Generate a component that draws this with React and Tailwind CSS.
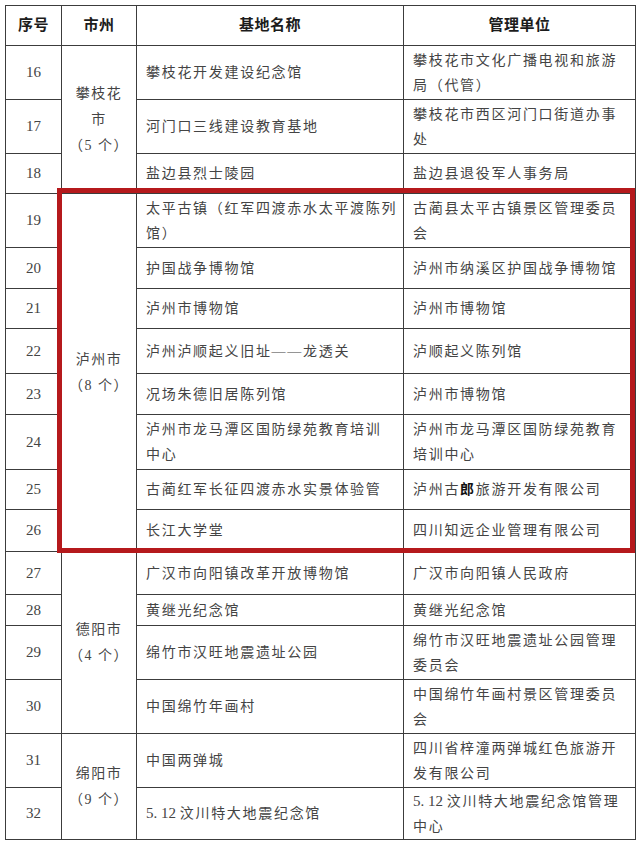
const rows = [
  { no: 16, h: 54, name: ["攀枝花开发建设纪念馆"], unit: ["攀枝花市文化广播电视和旅游", "局（代管）"], city: { lines: ["攀枝花", "市", "（5 个）"], span: 3 } },
  { no: 17, h: 54, name: ["河门口三线建设教育基地"], unit: ["攀枝花市西区河门口街道办事", "处"] },
  { no: 18, h: 40, name: ["盐边县烈士陵园"], unit: ["盐边县退役军人事务局"] },
  { no: 19, h: 54, name: ["太平古镇（红军四渡赤水太平渡陈列", "馆）"], unit: ["古蔺县太平古镇景区管理委员", "会"], city: { lines: ["泸州市", "（8 个）"], span: 8 } },
  { no: 20, h: 41, name: ["护国战争博物馆"], unit: ["泸州市纳溪区护国战争博物馆"] },
  { no: 21, h: 40, name: ["泸州市博物馆"], unit: ["泸州市博物馆"] },
  { no: 22, h: 45, name: ["泸州泸顺起义旧址——龙透关"], unit: ["泸顺起义陈列馆"] },
  { no: 23, h: 41, name: ["况场朱德旧居陈列馆"], unit: ["泸州市博物馆"] },
  { no: 24, h: 55, name: ["泸州市龙马潭区国防绿苑教育培训", "中心"], unit: ["泸州市龙马潭区国防绿苑教育", "培训中心"] },
  { no: 25, h: 40, name: ["古蔺红军长征四渡赤水实景体验管"], unit: ["泸州古郎旅游开发有限公司"] },
  { no: 26, h: 42, name: ["长江大学堂"], unit: ["四川知远企业管理有限公司"] },
  { no: 27, h: 43, name: ["广汉市向阳镇改革开放博物馆"], unit: ["广汉市向阳镇人民政府"], city: { lines: ["德阳市", "（4 个）"], span: 4 } },
  { no: 28, h: 31, name: ["黄继光纪念馆"], unit: ["黄继光纪念馆"] },
  { no: 29, h: 54, name: ["绵竹市汉旺地震遗址公园"], unit: ["绵竹市汉旺地震遗址公园管理", "委员会"] },
  { no: 30, h: 54, name: ["中国绵竹年画村"], unit: ["中国绵竹年画村景区管理委员", "会"] },
  { no: 31, h: 54, name: ["中国两弹城"], unit: ["四川省梓潼两弹城红色旅游开", "发有限公司"], city: { lines: ["绵阳市", "（9 个）"], span: 2 } },
  { no: 32, h: 52, name: ["@汶川特大地震纪念馆"], unit: ["@汶川特大地震纪念馆管理", "中心"] },
];

// "@" marks the "5. 12 " prefix, set in the serif face without tracking
function Line({ text }) {
  if (text.startsWith("@")) {
    return (
      <>
        <span className="tracking-normal text-[15px]">5. 12 </span>
        {text.slice(1)}
      </>
    );
  }
  if (text.includes("郎")) {
    const [a, b] = text.split("郎");
    return (
      <>
        {a}
        <b className="font-bold text-[#111]">郎</b>
        {b}
      </>
    );
  }
  return text;
}

function Lines({ lines }) {
  return lines.map((l, i) => (
    <div key={i} className="whitespace-nowrap">
      <Line text={l} />
    </div>
  ));
}

const cell = "border-[1.5px] border-[#3c3c3c] align-middle";

export default function App() {
  return (
    <div
      className="relative w-[640px] h-[847px] bg-white pl-[5px] pt-[5px]"
      style={{ fontFamily: '"Liberation Serif", "Noto Sans CJK SC", serif' }}
    >
      <table className="table-fixed border-collapse w-[630px] text-[#444] text-[14px] tracking-[1.7px] leading-[25px]">
        <colgroup>
          <col className="w-[56px]" />
          <col className="w-[75px]" />
          <col className="w-[267px]" />
          <col className="w-[232px]" />
        </colgroup>
        <thead>
          <tr className="h-[40px] text-[15px] font-bold text-[#1c1c1c] tracking-[0.5px]">
            <th className={cell}>序号</th>
            <th className={cell}>市州</th>
            <th className={cell}>基地名称</th>
            <th className={cell}>管理单位</th>
          </tr>
        </thead>
        <tbody>
          {rows.map((r) => (
            <tr key={r.no} style={{ height: r.h }}>
              <td className={`${cell} text-center text-[15px] tracking-normal`}>{r.no}</td>
              {r.city && (
                <td rowSpan={r.city.span} className={`${cell} text-center leading-[26px] tracking-[1.5px]`}>
                  <Lines lines={r.city.lines} />
                </td>
              )}
              <td className={`${cell} pl-[9px]`}>
                <Lines lines={r.name} />
              </td>
              <td className={`${cell} pl-[9px]`}>
                <Lines lines={r.unit} />
              </td>
            </tr>
          ))}
        </tbody>
      </table>
      <div className="absolute left-[57px] top-[188px] w-[578px] h-[365px] border-[5px] border-[#b5191c] pointer-events-none" />
    </div>
  );
}
